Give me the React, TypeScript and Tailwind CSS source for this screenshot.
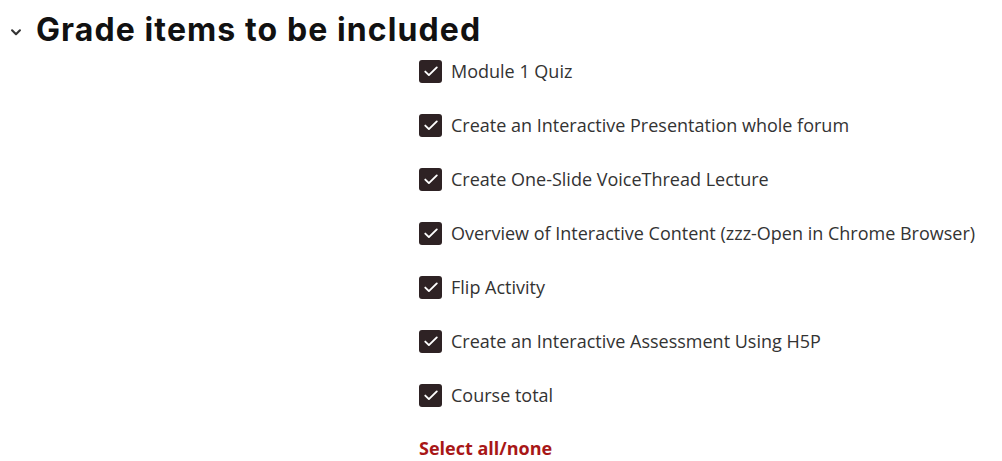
import React from 'react';

const items = [
  'Module 1 Quiz',
  'Create an Interactive Presentation whole forum',
  'Create One-Slide VoiceThread Lecture',
  'Overview of Interactive Content (zzz-Open in Chrome Browser)',
  'Flip Activity',
  'Create an Interactive Assessment Using H5P',
  'Course total',
];

const CheckBox = () => (
  <span className="flex h-[23px] w-[23px] shrink-0 items-center justify-center rounded-[3px] bg-[#2e2224]">
    <svg width="16" height="16" viewBox="0 0 16 16" fill="none">
      <path d="M2.3 8.6l3.6 3.5L13.8 4.4" stroke="#fff" strokeWidth="1.9" strokeLinecap="round" strokeLinejoin="round" />
    </svg>
  </span>
);

export default function App() {
  return (
    <div className="h-[461px] w-[1002px] overflow-hidden bg-white" style={{ fontFamily: '"Open Sans", sans-serif' }}>
      <div className="flex items-center pl-[9px] pt-[10px]">
        <svg width="14" height="14" viewBox="0 0 16 16" fill="none" className="mt-[4px]">
          <path d="M3.5 6l4.5 4.5L12.5 6" stroke="#333" strokeWidth="2.4" strokeLinecap="round" strokeLinejoin="round" />
        </svg>
        <h2
          className="ml-[13px] text-[32px] font-bold leading-[40px] tracking-[1.1px] text-[#111]"
          style={{ fontFamily: 'Inter, "Liberation Sans", sans-serif' }}
        >
          Grade items to be included
        </h2>
      </div>
      <div className="ml-[419px] mt-[9px]">
        <ul className="flex flex-col gap-[30px]">
          {items.map((t) => (
            <li key={t} className="flex h-[24px] items-center gap-[9px]">
              <CheckBox />
              <span className="text-[18px] leading-[24px] text-[#333]">{t}</span>
            </li>
          ))}
        </ul>
        <a className="mt-[29px] block text-[18px] font-bold leading-[24px] text-[#a81717]">Select all/none</a>
      </div>
    </div>
  );
}
